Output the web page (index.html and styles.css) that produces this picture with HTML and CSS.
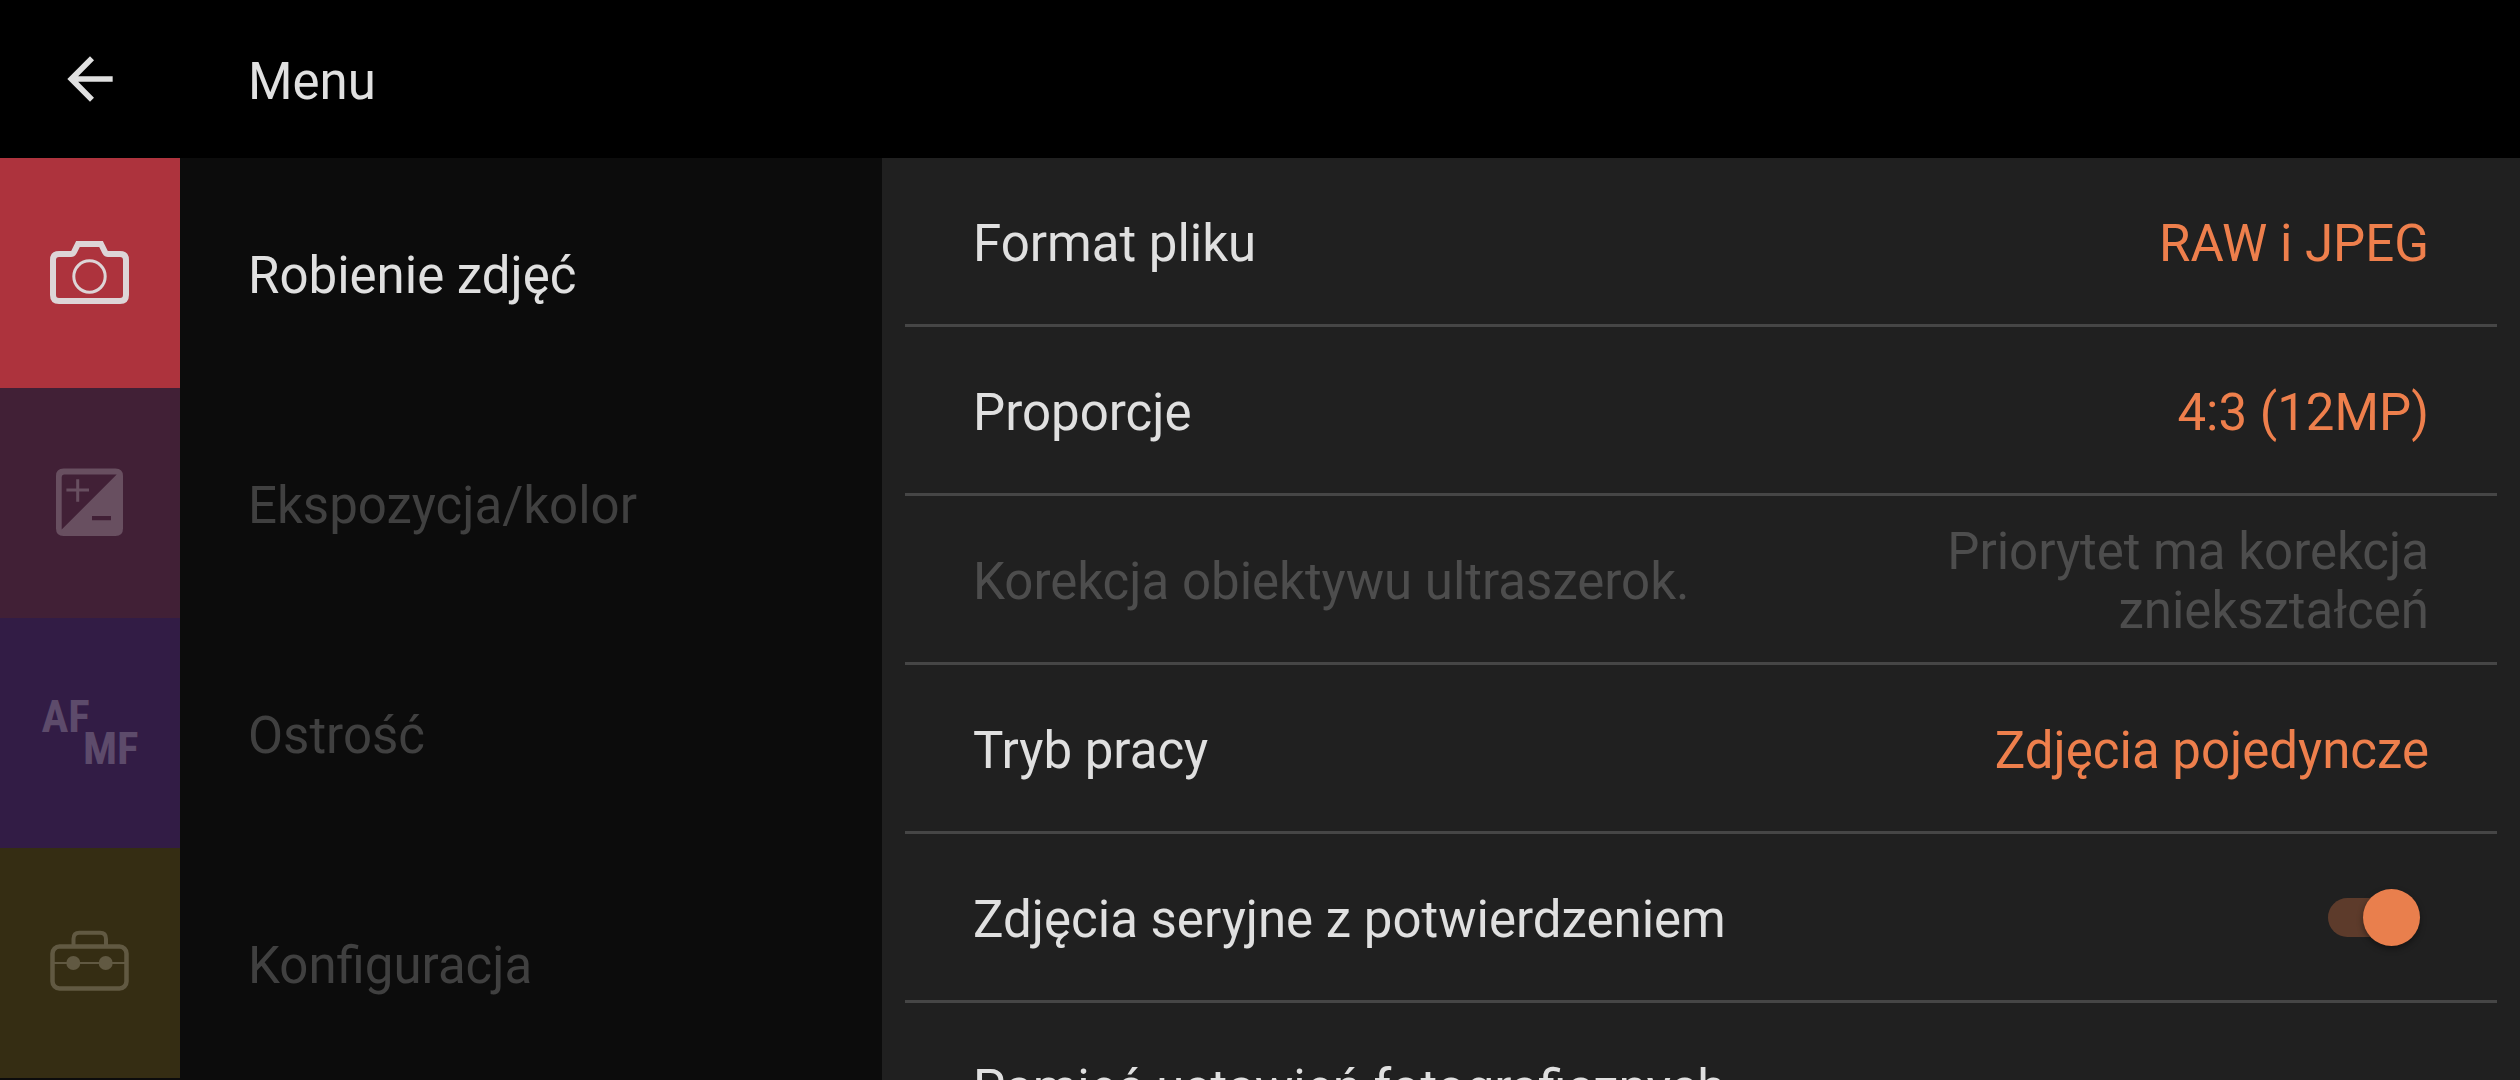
FILE: index.html
```html
<!DOCTYPE html>
<html lang="pl">
<head>
    <meta charset="UTF-8">
    <meta name="viewport" content="width=device-width, initial-scale=1.0">
    <title>Menu</title>
    <link rel="stylesheet" href="styles.css">
</head>
<body>
    <header class="header">
        <button type="button" class="back-button" aria-label="Wstecz">
            <svg class="back-icon" viewBox="0 0 24 24">
                <path d="M20 11H7.83l5.59-5.59L12 4l-8 8 8 8 1.41-1.41L7.83 13H20v-2z"/>
            </svg>
        </button>
        <h1>Menu</h1>
    </header>

    <div class="content">
        <nav class="sidebar">
            <button type="button" class="category shooting active">
                <span class="tile">
                    <svg class="icon" viewBox="0 0 80 80" fill="none" stroke="currentColor">
                        <path stroke-width="6" d="M9 21H21Q23 21 24 19L28 11H51L55 19Q56 21 58 21H70Q76 21 76 27V62Q76 68 70 68H9Q3 68 3 62V27Q3 21 9 21Z"/>
                        <circle cx="39.5" cy="43.5" r="15.7" stroke-width="3"/>
                    </svg>
                </span>
                <span class="category-name">Robienie zdjęć</span>
            </button>
            <button type="button" class="category exposure">
                <span class="tile">
                    <svg class="icon" viewBox="0 0 80 80" fill="currentColor">
                        <path fill-rule="evenodd" d="M13.500 5.500H65.500Q73 5.500 73 13V65.500Q73 73 65.500 73H13.500Q6 73 6 65.500V13Q6 5.500 13.500 5.500ZM14 11.500Q11.700 11.500 11.700 14V66.500L66.700 11.500ZM42 53V57.300H61V53Z"/>
                        <path d="M26.200 16.300h3v9.200h9.800v3h-9.800v10.200h-3v-10.200h-9.800v-3h9.800z"/>
                    </svg>
                </span>
                <span class="category-name">Ekspozycja/kolor</span>
            </button>
            <button type="button" class="category focus">
                <span class="tile">
                    <span class="focus-icon">
                        <span>AF</span>
                        <span class="mf">MF</span>
                    </span>
                </span>
                <span class="category-name">Ostrość</span>
            </button>
            <button type="button" class="category setup">
                <span class="tile">
                    <svg class="icon" viewBox="0 0 80 80" fill="none" stroke="currentColor">
                        <rect x="2.500" y="23.500" width="74" height="42" rx="7" stroke-width="4.500"/>
                        <path stroke-width="4" d="M23.500 22V16Q23.500 9.800 29.500 9.800H50Q56 9.800 56 16V22"/>
                        <path stroke-width="2" d="M4 40H75"/>
                        <circle cx="23.300" cy="40" r="7" fill="currentColor" stroke="none"/>
                        <circle cx="55.700" cy="40" r="7" fill="currentColor" stroke="none"/>
                    </svg>
                </span>
                <span class="category-name">Konfiguracja</span>
            </button>
        </nav>

        <main class="settings">
            <button type="button" class="setting">
                <span class="setting-name">Format pliku</span>
                <span class="value">RAW i JPEG</span>
            </button>
            <button type="button" class="setting">
                <span class="setting-name">Proporcje</span>
                <span class="value">4:3 (12MP)</span>
            </button>
            <button type="button" class="setting" disabled>
                <span class="setting-name">Korekcja obiektywu ultraszerok.</span>
                <span class="value">Priorytet ma korekcja zniekształceń</span>
            </button>
            <button type="button" class="setting">
                <span class="setting-name">Tryb pracy</span>
                <span class="value">Zdjęcia pojedyncze</span>
            </button>
            <div class="setting">
                <label class="setting-name" for="burst">Zdjęcia seryjne z potwierdzeniem</label>
                <input type="checkbox" id="burst" class="switch" checked>
            </div>
            <button type="button" class="setting">
                <span class="setting-name">Pamięć ustawień fotograficznych</span>
            </button>
        </main>
    </div>
</body>
</html>
```
FILE: styles.css
```css
* {
    box-sizing: border-box;
}

body {
    margin: 0;
    height: 100vh;
    display: flex;
    flex-direction: column;
    overflow: hidden;
    background-color: #000;
    color: #e0e0e0;
    font-family: Roboto, "Noto Sans", sans-serif;
    font-size: 51px;
    line-height: 59px;
}

button {
    margin: 0;
    padding: 0;
    border: none;
    background: none;
    color: inherit;
    font: inherit;
    text-align: left;
    cursor: pointer;
}

/* Top bar */
.header {
    flex: none;
    display: flex;
    align-items: center;
    height: 158px;
}

.back-button {
    display: flex;
    justify-content: center;
    width: 180px;
}

.back-icon {
    width: 68px;
    height: 68px;
    fill: currentColor;
}

h1 {
    margin: 0;
    padding: 4px 0 0 68px;
    font-size: 51px;
    font-weight: normal;
}

.content {
    flex: 1;
    min-height: 0;
    display: flex;
}

/* Categories on the left */
.sidebar {
    width: 35%;
    flex: none;
    background-color: #0c0c0c;
    overflow: hidden;
}

.category {
    display: flex;
    align-items: center;
    width: 100%;
    height: 230px;
    color: #404040;
}

.category.active {
    color: #e0e0e0;
}

.category-name {
    padding: 4px 0 0 68px;
}

.tile {
    display: flex;
    align-items: center;
    justify-content: center;
    width: 180px;
    height: 100%;
}

.icon {
    width: 80px;
    height: 80px;
}

.shooting .tile {
    background-color: #ad333d;
    color: #ddd5d7;
}

.exposure .tile {
    background-color: #412036;
    color: #684f60;
}

.focus .tile {
    background-color: #321c45;
    color: #5d4b6b;
}

.setup .tile {
    background-color: #352d13;
    color: #615942;
}

.focus-icon {
    display: flex;
    flex-direction: column;
    width: 97px;
    font-family: "Roboto Condensed", "Liberation Sans Narrow", "Liberation Sans", sans-serif;
    font-size: 45px;
    font-weight: bold;
    line-height: 32px;
}

.mf {
    text-align: right;
}

/* Settings list */
.settings {
    flex: 1;
    padding: 0 23px;
    background-color: #202020;
    overflow: hidden;
}

.setting {
    display: flex;
    align-items: center;
    justify-content: space-between;
    width: 100%;
    height: 169px;
    padding: 0 68px;
    border-bottom: 3px solid #464646;
}

.setting-name,
.value {
    padding-top: 4px;
}

.value {
    max-width: 40%;
    color: #ee7f4c;
    text-align: right;
}

.setting:disabled,
.setting:disabled .value {
    color: #4d4d4d;
    cursor: default;
}

.switch {
    appearance: none;
    position: relative;
    width: 92px;
    height: 57px;
    margin: 0 9px 0 0;
    cursor: pointer;
}

.switch::before {
    content: "";
    position: absolute;
    top: 9px;
    left: 0;
    width: 80px;
    height: 39px;
    border-radius: 20px;
    background-color: #5d3b2b;
}

.switch::after {
    content: "";
    position: absolute;
    top: 0;
    right: 0;
    width: 57px;
    height: 57px;
    border-radius: 50%;
    background-color: #e97f4d;
    box-shadow: 0 3px 6px rgba(0, 0, 0, 0.4);
}
```
